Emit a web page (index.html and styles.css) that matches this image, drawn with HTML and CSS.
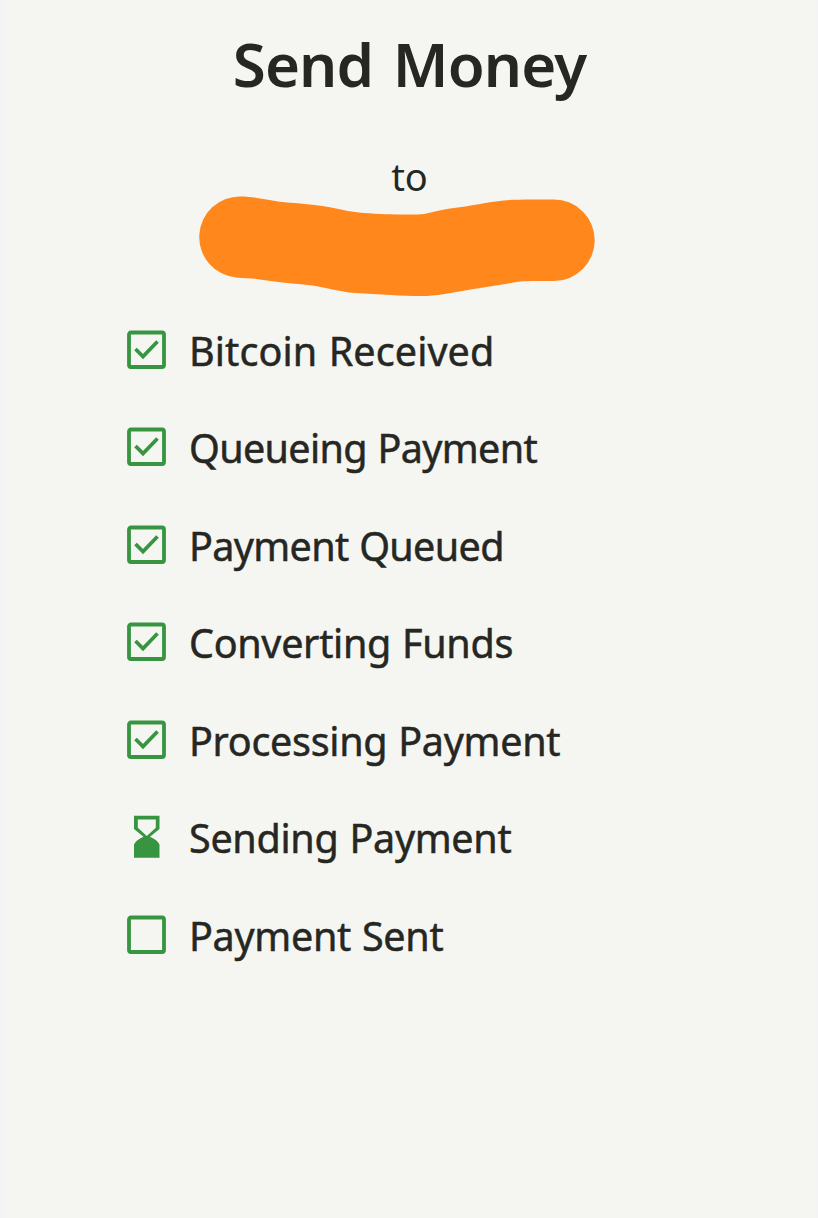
FILE: index.html
```html
<!DOCTYPE html>
<html lang="en">
<head>
  <meta charset="UTF-8">
  <meta name="viewport" content="width=device-width, initial-scale=1">
  <title>Send Money</title>
  <link rel="stylesheet" href="styles.css">
</head>
<body>
  <svg class="sprite" aria-hidden="true">
    <symbol id="box" viewBox="0 0 40 40">
      <rect x="2" y="2.500" width="35" height="34.500" rx="2" fill="none" stroke="currentColor" stroke-width="3.800"/>
    </symbol>
    <symbol id="check" viewBox="0 0 40 40">
      <use href="#box"/>
      <path d="M8.500 19l7.500 7.500 14.500-15" fill="none" stroke="currentColor" stroke-width="3.700"/>
    </symbol>
    <symbol id="hourglass" viewBox="0 0 40 44">
      <path fill="currentColor" fill-rule="evenodd" d="M7 .7h25.500V14L23 21.700C28 24 31 26 32.500 29.500V42.700H7V29.500C8.500 26 11.500 24 16.500 21.700L7 14zM10.800 4.500v8.300l9 8.200 9-8.200V4.500z"/>
    </symbol>
  </svg>

  <main class="page">
    <h1>Send Money</h1>
    <p class="to">to</p>
    <svg class="recipient" viewBox="0 0 396 102" aria-hidden="true">
      <path fill="#ff871b" d="M42 1.500C56 1.500 70 6 88 7.500C108 9 120 10 137 13.500C154 17.500 166 18 181 19C196 19.500 208 19.500 219 19.500C227 19.500 235 16 251 13.500C273 11 288 7 305 5.500C318 4 336 4.500 355 4.500A40.500 40.500 0 0 1 355 86C337 86 322 85.500 312 88C295 91 278 93 260 96.500C244 99.500 234 101 223 101C203 101 180 99.500 156 98C140 97 126 92 113 90.500C98 88.500 83 88 68 85.500C55 83 49 83.500 37 82.500A40.600 40.600 0 0 1 42 1.500z"/>
    </svg>

    <ul class="steps">
      <li class="loose"><svg class="icon"><use href="#check"/></svg><span>Bitcoin Received</span></li>
      <li class="tight"><svg class="icon"><use href="#check"/></svg><span>Queueing Payment</span></li>
      <li class="tight"><svg class="icon"><use href="#check"/></svg><span>Payment Queued</span></li>
      <li><svg class="icon"><use href="#check"/></svg><span>Converting Funds</span></li>
      <li><svg class="icon"><use href="#check"/></svg><span>Processing Payment</span></li>
      <li><svg class="icon icon-tall"><use href="#hourglass"/></svg><span>Sending Payment</span></li>
      <li><svg class="icon"><use href="#box"/></svg><span>Payment Sent</span></li>
    </ul>
  </main>
</body>
</html>
```
FILE: styles.css
```css
* {
  box-sizing: border-box;
}
body {
  margin: 0;
  background-color: #f5f6f2;
  color: #262723;
  font-family: "Noto Sans", "Open Sans", sans-serif;
}
.sprite {
  display: none;
}
.page {
  min-height: 1218px;
  padding-top: 23px;
  border-left: 6px solid #f4f4f5;
  border-right: 2px solid #f4f4f5;
}
h1 {
  margin: 0;
  font-size: 60px;
  line-height: 82px;
  font-weight: 600;
  letter-spacing: -0.9px;
  word-spacing: 5px;
  text-align: center;
  padding-right: 3px;
}
.to {
  margin: 46px 0 0;
  padding-right: 3px;
  font-size: 38px;
  line-height: 50px;
  text-align: center;
}
.recipient {
  display: block;
  width: 396px;
  height: 102px;
  margin: -6px 0 0 193px;
}
.steps {
  list-style: none;
  margin: 4px 0 0;
  padding: 0 0 0 121px;
}
.steps li {
  display: flex;
  align-items: center;
  gap: 20px;
  height: 97.5px;
  font-size: 39.5px;
  line-height: 50px;
  letter-spacing: -0.3px;
  word-spacing: 1px;
  -webkit-text-stroke: 0.5px #262723;
}
.steps .loose {
  letter-spacing: 0.1px;
}
.steps .tight {
  letter-spacing: -0.65px;
}
.steps span {
  padding: 2px 0 0 2px;
}
.icon {
  flex: none;
  width: 40px;
  height: 40px;
  color: #379440;
  -webkit-text-stroke: 0;
}
.icon-tall {
  height: 44px;
}
```
